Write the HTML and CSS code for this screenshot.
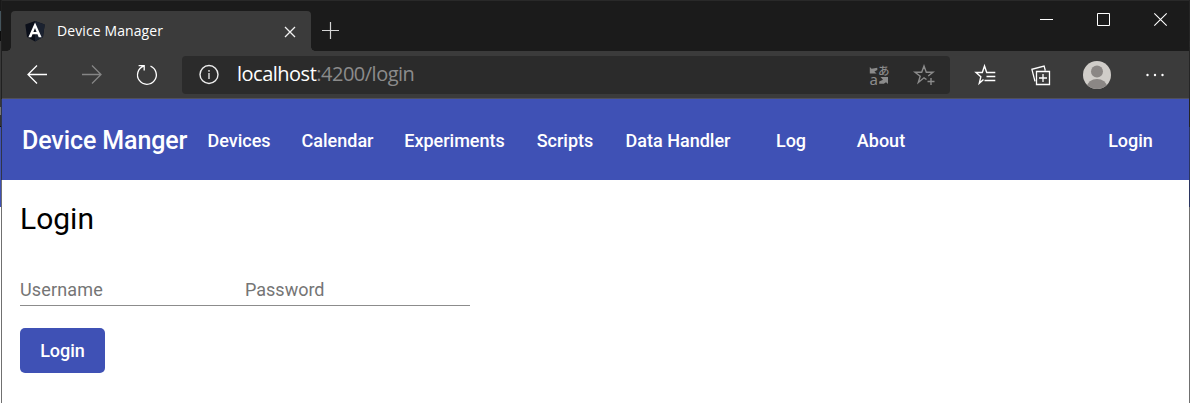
FILE: index.html
```
<!DOCTYPE html>
<html lang="en">
<head>
<meta charset="utf-8">
<title>Device Manager</title>
<link rel="stylesheet" href="styles.css">
</head>
<body>
<div class="desktop">
  <div class="window">
    <header class="titlebar">
      <div class="tab">
        <svg class="tab-icon" width="20" height="20" viewBox="0 0 20 20"><path fill="#0b0f1a" d="M10 0 19.700 3.400 18 16 10 20.500 2 16 .3 3.400z"/><path fill="#1b2230" d="M10 0 19.700 3.400 18 16 10 20.500z"/><path fill="#fff" fill-rule="evenodd" d="M10 1.600 3.400 16.200H6.300L7.500 13.300H12.500L13.700 16.200H16.600zM10 7 11.600 11H8.400z"/></svg>
        <span class="tab-title">Device Manager</span>
        <svg class="tab-close" width="12" height="12" viewBox="0 0 12 12"><path d="M1 1 11 11M11 1 1 11" stroke="#f2f2f2" stroke-width="1.300"/></svg>
      </div>
      <svg class="new-tab" width="17" height="17" viewBox="0 0 17 17"><path d="M8.500 0V17M0 8.500H17" stroke="#d5d5d5" stroke-width="1.200"/></svg>
      <div class="window-controls">
        <svg width="13" height="13" viewBox="0 0 13 13"><path d="M0 6.500H13" stroke="#fff"/></svg>
        <svg width="13" height="13" viewBox="0 0 13 13"><path d="M.5 .5H12.500V12.500H.5z" fill="none" stroke="#fff"/></svg>
        <svg width="13" height="13" viewBox="0 0 13 13"><path d="M.3 .3 12.700 12.700M12.700 .3 .3 12.700" stroke="#fff" stroke-width="1.100"/></svg>
      </div>
    </header>
    <div class="toolbar">
      <svg class="back" width="20" height="20" viewBox="0 0 20 20" fill="none" stroke="#fff" stroke-width="1.300"><path d="M20 9.500H1M10 .5 1 9.500 10 18.500"/></svg>
      <svg class="forward" width="20" height="20" viewBox="0 0 20 20" fill="none" stroke="#858585" stroke-width="1.300"><path d="M0 9.500H19M10 .5 19 9.500 10 18.500"/></svg>
      <svg class="reload" width="22" height="22" viewBox="0 0 22 22" fill="none" stroke="#fff" stroke-width="1.300"><path d="M14.500 2.200A9.400 9.400 0 1 1 7.600 2.100M2.600 1.600H8.200V6.500"/></svg>
      <div class="address">
        <svg class="info" width="20" height="20" viewBox="0 0 20 20"><circle cx="10" cy="9.500" r="9" fill="none" stroke="#eee" stroke-width="1.400"/><path d="M10 8V14M10 5V6.700" stroke="#ccc" stroke-width="1.600"/></svg>
        <span class="url"><span class="host">localhost</span><span class="path">:4200/login</span></span>
        <svg class="translate" width="20" height="20" viewBox="0 0 20 20"><path fill="#8b8b8b" d="M.8 2 2.600 3.800 8.300 2.800V5L5.400 6.400 7.600 8.500H.8zM19 12V19L17 17.200 14.800 18.800H10.200V16.500L14 14.800 11.500 12z"/><text class="glyph-a" x=".4" y="19.500">a</text><text class="glyph-kana" x="9" y="10">あ</text></svg>
        <svg class="star" width="21" height="20" viewBox="0 0 21 20" fill="none" stroke="#8b8b8b" stroke-width="1.400"><path d="M12.500 14.500 10 12.800 4.300 17.500 6.200 11.200 1 7.200H7.700L10 1 12.300 7.200H19L14.200 11M17 13V20M13.500 16.500H20.500"/></svg>
      </div>
      <svg class="favorites" width="21" height="20" viewBox="0 0 21 20" fill="none" stroke="#fff" stroke-width="1.400"><path d="M8.500 14.500 4.300 18.300 5.800 11.800 1 7.500H7.300L9.500 1 11.700 7.500H20.300M11.500 11.500H20.300M9.500 15.500H20.300"/></svg>
      <svg class="collections" width="20" height="20" viewBox="0 0 20 20" fill="none" stroke="#fff" stroke-width="1.300"><path d="M5.500 6.500H18.500V19.500H5.500zM12 9V17M8 13H16M4 16.400 .9 4.300 13.100 1 14.300 5.500"/></svg>
      <svg class="avatar" width="28" height="28" viewBox="0 0 28 28"><clipPath id="disc"><circle cx="14" cy="14" r="14"/></clipPath><g clip-path="url(#disc)"><path fill="#d0cdc9" d="M0 0H28V28H0z"/><circle cx="14" cy="10.500" r="6" fill="#8b8785"/><ellipse cx="14" cy="26" rx="10" ry="8" fill="#8b8785"/></g></svg>
      <svg class="more" width="18" height="4" viewBox="0 0 18 4" fill="#fff"><circle cx="1.500" cy="2" r="1.200"/><circle cx="9" cy="2" r="1.200"/><circle cx="16.500" cy="2" r="1.200"/></svg>
    </div>
    <nav class="navbar">
      <span class="brand">Device Manger</span>
      <a class="nav-link devices">Devices</a>
      <a class="nav-link calendar">Calendar</a>
      <a class="nav-link experiments">Experiments</a>
      <a class="nav-link scripts">Scripts</a>
      <a class="nav-link handler">Data Handler</a>
      <a class="nav-link log">Log</a>
      <a class="nav-link about">About</a>
      <a class="nav-link sign-in">Login</a>
    </nav>
    <main class="page">
      <h1 class="heading">Login</h1>
      <form class="fields">
        <input class="field username" type="text" placeholder="Username">
        <input class="field" type="password" placeholder="Password">
      </form>
      <button class="submit" type="button">Login</button>
    </main>
  </div>
</div>
</body>
</html>
```
FILE: styles.css
```
* { box-sizing: border-box; }
body { margin: 0; background: #fff; font-family: Roboto, sans-serif; }
svg { display: block; flex: none; overflow: visible; }

/* Sliver of the windows behind, then this window's own border */
.desktop {
  height: 403px;
  padding: 0 1px;
  overflow: hidden;
  background:
    linear-gradient(#252525 0 41px, #282828 41px 47px, #252525 47px 127px, #2b3560 127px 207px, #707070 207px) right / 1px 100% no-repeat,
    linear-gradient(#181818 0 11px, #44545c 11px 31px, #0c0c0c 31px 41px, #383838 41px 107px, #777 107px 115px, #333 115px 126px, #111 126px 127px, #3f51b5 127px 207px, #fff 207px) left / 1px 100% no-repeat;
}
.window {
  height: 403px;
  padding-left: 1px;
  background: linear-gradient(#202020 0 99px, #2f3548 99px 180px, #707070 180px) left / 1px 100% no-repeat;
}

.titlebar { display: flex; height: 51px; border-top: 1px solid #292929; background: #1b1b1b; }
.tab {
  display: flex; align-items: center;
  position: relative;
  width: 300px; height: 40px;
  margin: 10px 0 0 9px; padding: 0 15px 0 14px;
  border-radius: 4px 4px 0 0;
  background: #3b3b3b;
}
.tab::before, .tab::after {
  content: ""; position: absolute; bottom: 0; width: 4px; height: 4px;
}
.tab::before { left: -4px; background: radial-gradient(circle at 0 0, transparent 3.5px, #3b3b3b 4px); }
.tab::after { right: -4px; background: radial-gradient(circle at 100% 0, transparent 3.5px, #3b3b3b 4px); }
.tab-title {
  margin: 0 0 0 12px;
  color: #fff;
  font: 400 14px/20px "Open Sans", "Noto Sans", sans-serif;
  letter-spacing: .1px;
  white-space: nowrap;
}
.tab-close { margin: 2px 0 0 auto; }
.new-tab { margin: 21px 0 0 11px; }
.window-controls { display: flex; gap: 44px; margin: 12px 22px 0 auto; }

.toolbar {
  display: flex; align-items: center;
  height: 48px; padding: 0 25px;
  border-bottom: 1px solid #50505c;
  background: #3b3b3b;
}
.forward { margin-left: 35px; }
.reload { margin-left: 34px; }
.address {
  display: flex; align-items: center;
  width: 768px; height: 38px;
  margin-left: 24px; padding: 0 15px 0 17px;
  border-radius: 4px;
  background: #2b2b2b;
}
.url {
  margin: 0 0 2px 18px;
  font: 20px/28px "Open Sans", "Noto Sans", sans-serif;
  letter-spacing: -.5px;
  white-space: nowrap;
}
.host { color: #fff; }
.path { color: #8b8b8b; }
.translate { margin-left: auto; fill: #8b8b8b; }
.glyph-a { font: 15px "Noto Sans", sans-serif; }
.glyph-kana { font: 500 11.5px "Noto Sans CJK JP", sans-serif; }
.star { margin-left: 25px; }
.favorites { margin-left: 25px; }
.collections { margin-left: 35px; }
.avatar { margin-left: 32px; }
.more { margin-left: 35px; }

.navbar {
  display: flex; align-items: center;
  height: 81px; padding: 2px 20px 0;
  color: #fff; background: #3f51b5;
}
.brand { width: 168px; font: 500 25px/32px Roboto, sans-serif; letter-spacing: -.1px; white-space: nowrap; }
.nav-link { flex: none; font: 500 18px/24px Roboto, sans-serif; text-align: center; white-space: nowrap; }
.devices { width: 98px; }
.calendar { width: 99px; }
.experiments { width: 135px; }
.scripts { width: 86px; }
.handler { width: 140px; }
.log { width: 86px; }
.about { width: 94px; }
.sign-in { width: 77px; margin-left: auto; }

.page { padding: 19px 18px; }
.heading { margin: 0; font: 400 30px/40px Roboto, sans-serif; }
.fields { display: flex; width: 450px; margin-top: 40px; border-bottom: 1px solid #8c8c8c; }
.field {
  width: 225px; height: 26px; padding: 0 0 6px;
  border: 0; background: none;
  font: 18px/20px Roboto, sans-serif;
}
.username { letter-spacing: .15px; }
.field::placeholder { color: #757575; opacity: 1; }
.submit {
  display: block;
  width: 85px; height: 45px;
  margin-top: 22px; padding: 0;
  border: 0; border-radius: 5px;
  color: #fff; background: #3f51b5;
  font: 500 18px/45px Roboto, sans-serif;
}
```
